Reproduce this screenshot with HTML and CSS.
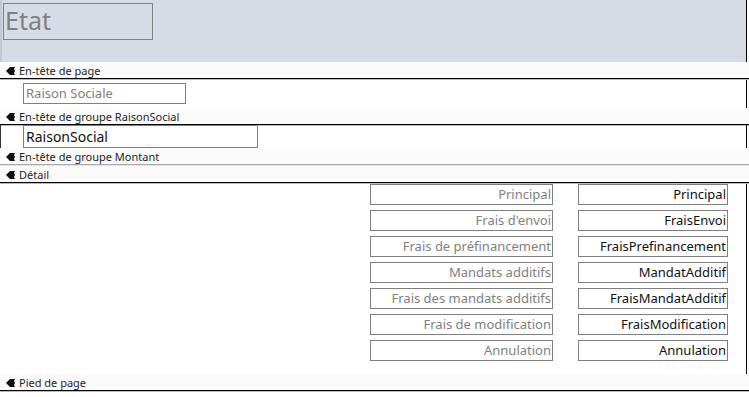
FILE: index.html
```html
<!DOCTYPE html>
<html>
<head>
    <title>Etat - Mode Création</title>
    <link rel="stylesheet" href="styles.css">
</head>
<body>
    <div class="report-header">
        <div class="title-box">Etat</div>
    </div>

    <div class="bar"><span class="grip"><svg width="9" height="8" viewBox="0 0 9 8"><path d="M0 4 L4 0 H9 L8 2 L9 4 L8 6 L9 8 H4 Z" fill="#111"/></svg></span>En-tête de page</div>
    <div class="section page-header">
        <div class="box label wide">Raison Sociale</div>
    </div>

    <div class="bar"><span class="grip"><svg width="9" height="8" viewBox="0 0 9 8"><path d="M0 4 L4 0 H9 L8 2 L9 4 L8 6 L9 8 H4 Z" fill="#111"/></svg></span>En-tête de groupe RaisonSocial</div>
    <div class="section group-header">
        <div class="box field group-field">RaisonSocial</div>
    </div>

    <div class="bar empty"><span class="grip"><svg width="9" height="8" viewBox="0 0 9 8"><path d="M0 4 L4 0 H9 L8 2 L9 4 L8 6 L9 8 H4 Z" fill="#111"/></svg></span>En-tête de groupe Montant</div>
    <div class="bar"><span class="grip"><svg width="9" height="8" viewBox="0 0 9 8"><path d="M0 4 L4 0 H9 L8 2 L9 4 L8 6 L9 8 H4 Z" fill="#111"/></svg></span>Détail</div>
    <div class="section detail">
        <div class="detail-grid">
            <div class="box label right">Principal</div>
            <div class="box field right">Principal</div>
            <div class="box label right">Frais d'envoi</div>
            <div class="box field right">FraisEnvoi</div>
            <div class="box label right">Frais de préfinancement</div>
            <div class="box field right">FraisPrefinancement</div>
            <div class="box label right">Mandats additifs</div>
            <div class="box field right">MandatAdditif</div>
            <div class="box label right">Frais des mandats additifs</div>
            <div class="box field right">FraisMandatAdditif</div>
            <div class="box label right">Frais de modification</div>
            <div class="box field right">FraisModification</div>
            <div class="box label right">Annulation</div>
            <div class="box field right">Annulation</div>
        </div>
    </div>

    <div class="bar"><span class="grip"><svg width="9" height="8" viewBox="0 0 9 8"><path d="M0 4 L4 0 H9 L8 2 L9 4 L8 6 L9 8 H4 Z" fill="#111"/></svg></span>Pied de page</div>
    <div class="section footer"></div>
</body>
</html>
```

FILE: styles.css
```css
body {
    margin: 0;
    background: #ffffff;
    font-family: "Noto Sans", "Open Sans", sans-serif;
    width: 749px;
    overflow: hidden;
}
.report-header {
    width: 747px;
    height: 62px;
    box-sizing: border-box;
    background: #d6dce5;
    border-left: 2px solid #c3c8cf;
    border-right: 1px solid #000;
    padding: 3px 0 0 1px;
}
.title-box {
    width: 150px;
    height: 37px;
    box-sizing: border-box;
    border: 1px solid #7f7f7f;
    color: #808080;
    font-size: 25px;
    line-height: 33px;
    padding-left: 1px;
}
.bar {
    height: 17px;
    box-sizing: border-box;
    padding-top: 2px;
    background: #fbfbfb;
    border-bottom: 1px solid #000;
    box-shadow: 0 1px 0 #b9b9b9;
    margin-bottom: 1px;
    font-size: 11px;
    line-height: 14px;
    color: #1e1e1e;
    display: flex;
    align-items: center;
}
.bar.empty {
    border-bottom-color: #a8a8a8;
    box-shadow: 0 1px 0 #e4e4e4;
}
.grip {
    display: inline-flex;
    margin: 0 4px 0 6px;
}
.section {
    width: 747px;
    box-sizing: border-box;
    border-right: 1px solid #000;
}
.page-header {
    height: 28px;
    padding: 3px 0 0 23px;
}
.group-header {
    height: 23px;
    border-left: 1px solid #333;
    padding: 0 0 0 22px;
}
.group-header .box {
    margin-top: -1px;
}
.detail {
    height: 190px;
    padding: 0 0 0 370px;
}
.footer {
    height: 4px;
    border-right: none;
}
.box {
    box-sizing: border-box;
    border: 1px solid #7f7f7f;
    height: 21px;
    font-size: 13px;
    line-height: 19px;
    white-space: nowrap;
    overflow: hidden;
}
.label {
    color: #7f7f7f;
}
.field {
    color: #111;
}
.wide {
    width: 163px;
    padding-left: 2px;
}
.group-field {
    width: 235px;
    height: 23px;
    line-height: 21px;
    padding-left: 2px;
    font-size: 14px;
}
.right {
    text-align: right;
    padding-right: 1px;
}
.detail-grid {
    display: grid;
    grid-template-columns: 183px 150px;
    column-gap: 25px;
    row-gap: 5px;
}
```
